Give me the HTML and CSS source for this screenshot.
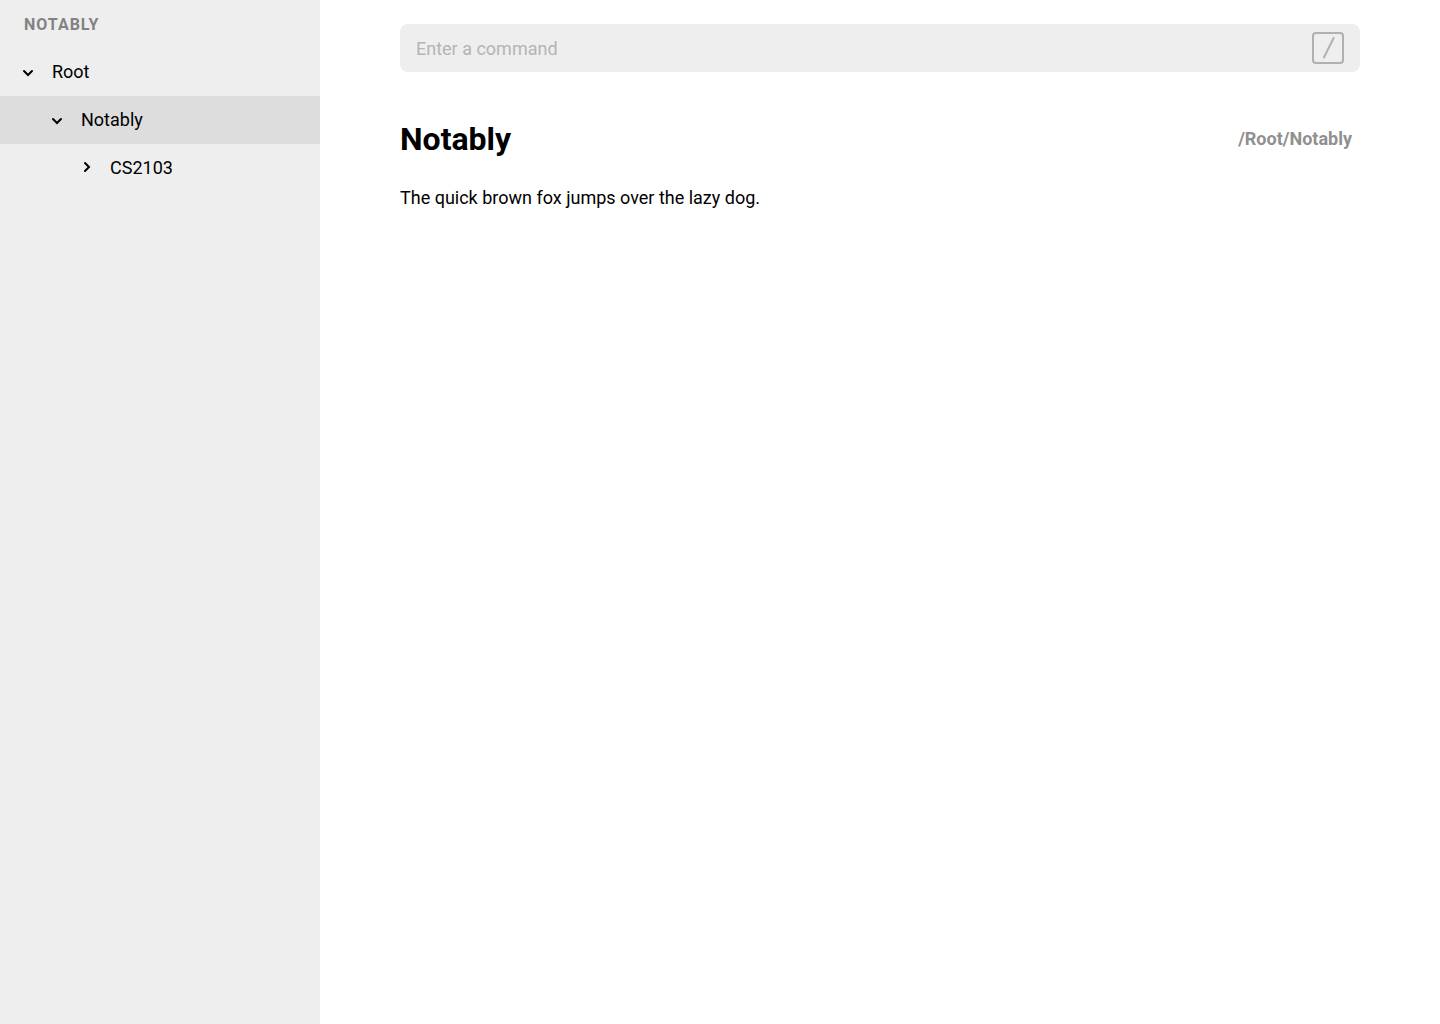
FILE: index.html
```html
<!DOCTYPE html>
<html lang="en">
<head>
<meta charset="utf-8">
<title>Notably</title>
<link rel="stylesheet" href="styles.css">
</head>
<body>
<div class="app">
  <nav class="sidebar" aria-label="Notes">
    <h2 class="brand">NOTABLY</h2>
    <ul class="tree">
      <li>
        <button class="node level-1" type="button" aria-expanded="true"><svg class="chevron" viewBox="0 0 16 16" aria-hidden="true"><path d="M4 7l4 4 4-4"/></svg>Root</button>
        <ul class="tree">
          <li>
            <button class="node level-2 selected" type="button" aria-expanded="true"><svg class="chevron" viewBox="0 0 16 16" aria-hidden="true"><path d="M4 7l4 4 4-4"/></svg>Notably</button>
            <ul class="tree">
              <li><button class="node level-3" type="button" aria-expanded="false"><svg class="chevron" viewBox="0 0 16 16" aria-hidden="true"><path d="M7 3l4 4-4 4"/></svg>CS2103</button></li>
            </ul>
          </li>
        </ul>
      </li>
    </ul>
  </nav>
  <main class="content">
    <form class="command">
      <input class="command-input" type="text" placeholder="Enter a command" aria-label="Enter a command">
      <svg class="shortcut" viewBox="0 0 32 32" aria-hidden="true"><rect x="1" y="1" width="30" height="30" rx="3"/><path d="M22 5.3L11.5 26.2"/></svg>
    </form>
    <article class="note">
      <header class="note-header">
        <h1 class="note-title">Notably</h1>
        <span class="note-path">/Root/Notably</span>
      </header>
      <p class="note-body">The quick brown fox jumps over the lazy dog.</p>
    </article>
  </main>
</div>
</body>
</html>
```
FILE: styles.css
```css
* {
  box-sizing: border-box;
}

body {
  margin: 0;
  background: #fff;
  color: #000;
  font: 18px/24px Roboto, sans-serif;
}

.app {
  display: flex;
  min-height: 100vh;
}

.sidebar {
  flex: 0 0 320px;
  background: #eee;
}

.brand {
  margin: 0;
  padding: 2px 24px 0;
  color: #828282;
  font-size: 16px;
  line-height: 46px;
  letter-spacing: 1px;
}

.tree {
  margin: 0;
  padding: 0;
  list-style: none;
}

.node {
  display: flex;
  align-items: center;
  gap: 16px;
  width: 100%;
  height: 48px;
  padding: 0 20px;
  border: 0;
  background: none;
  color: inherit;
  font: inherit;
  text-align: left;
}

.level-2 {
  padding-left: 49px;
}

.level-3 {
  padding-left: 78px;
}

.selected {
  background: #ddd;
}

.chevron {
  width: 16px;
  height: 16px;
  fill: none;
  stroke: #000;
  stroke-width: 2;
  stroke-linecap: round;
}

.content {
  flex: 1;
  padding: 24px 80px;
}

.command {
  display: flex;
  align-items: center;
  gap: 16px;
  height: 48px;
  padding: 0 16px;
  border-radius: 8px;
  background: #eee;
}

.command-input {
  flex: 1;
  min-width: 0;
  padding: 2px 0 0;
  border: 0;
  outline: 0;
  background: none;
  color: inherit;
  font: inherit;
}

.command-input::placeholder {
  color: #b4b4b4;
}

.shortcut {
  width: 32px;
  height: 32px;
  fill: none;
  stroke: #b0b0b0;
  stroke-width: 2;
}

.note {
  padding-top: 48px;
}

.note-header {
  display: flex;
  align-items: center;
  justify-content: space-between;
  padding-right: 8px;
}

.note-title {
  margin: 0;
  font-size: 32px;
  line-height: 38px;
}

.note-path {
  color: #909090;
  font-weight: 700;
}

.note-body {
  margin: 28px 0 0;
}
```
